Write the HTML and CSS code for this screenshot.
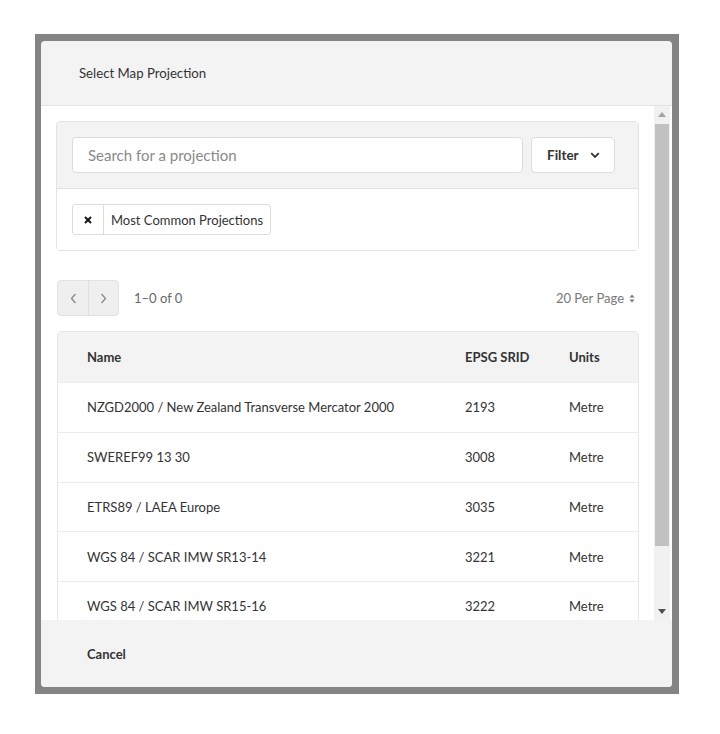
FILE: index.html
```html
<!DOCTYPE html>
<html>
<head>
<meta charset="utf-8">
<link rel="stylesheet" href="styles.css">
</head>
<body>
<div class="backdrop">
  <div class="modal">
    <div class="modal-header">Select Map Projection</div>
    <div class="modal-body">
      <div class="scroll-content">
        <div class="filter-panel">
          <div class="filter-top">
            <div class="search-input">Search for a projection</div>
            <div class="filter-btn">Filter
              <svg class="chev" width="10" height="7" viewBox="0 0 10 7"><path d="M1.2 1.2 L5 5 L8.8 1.2" fill="none" stroke="#333" stroke-width="1.8"/></svg>
            </div>
          </div>
          <div class="filter-bottom">
            <div class="chip">
              <span class="chip-x">
                <svg width="8" height="8" viewBox="0 0 8 8"><path d="M1 1 L7 7 M7 1 L1 7" stroke="#111" stroke-width="1.9"/></svg>
              </span>
              <span class="chip-label">Most Common Projections</span>
            </div>
          </div>
        </div>

        <div class="pager">
          <div class="pager-left">
            <div class="pager-btns">
              <span class="pbtn"><svg width="7" height="11" viewBox="0 0 7 11"><path d="M5.5 1 L1.5 5.5 L5.5 10" fill="none" stroke="#888" stroke-width="1.3"/></svg></span>
              <span class="pbtn"><svg width="7" height="11" viewBox="0 0 7 11"><path d="M1.5 1 L5.5 5.5 L1.5 10" fill="none" stroke="#888" stroke-width="1.3"/></svg></span>
            </div>
            <span class="pager-count">1–0 of 0</span>
          </div>
          <div class="per-page">20 Per Page
            <svg width="6" height="9" viewBox="0 0 6 9"><path d="M3 0.5 L5.5 3.5 H0.5 Z M3 8.5 L5.5 5.5 H0.5 Z" fill="#777"/></svg>
          </div>
        </div>

        <div class="table">
          <div class="row head">
            <div class="c1">Name</div><div class="c2">EPSG SRID</div><div class="c3">Units</div>
          </div>
          <div class="row">
            <div class="c1">NZGD2000 / New Zealand Transverse Mercator 2000</div><div class="c2">2193</div><div class="c3">Metre</div>
          </div>
          <div class="row">
            <div class="c1">SWEREF99 13 30</div><div class="c2">3008</div><div class="c3">Metre</div>
          </div>
          <div class="row">
            <div class="c1">ETRS89 / LAEA Europe</div><div class="c2">3035</div><div class="c3">Metre</div>
          </div>
          <div class="row">
            <div class="c1">WGS 84 / SCAR IMW SR13-14</div><div class="c2">3221</div><div class="c3">Metre</div>
          </div>
          <div class="row">
            <div class="c1">WGS 84 / SCAR IMW SR15-16</div><div class="c2">3222</div><div class="c3">Metre</div>
          </div>
        </div>
      </div>
      <div class="scrollbar">
        <div class="sb-btn"><svg width="8" height="5" viewBox="0 0 8 5"><path d="M4 0 L8 5 H0 Z" fill="#a3a3a3"/></svg></div>
        <div class="sb-thumb"></div>
        <div class="sb-rest"></div>
        <div class="sb-btn"><svg width="8" height="5" viewBox="0 0 8 5"><path d="M0 0 H8 L4 5 Z" fill="#505050"/></svg></div>
      </div>
    </div>
    <div class="modal-footer">Cancel</div>
  </div>
</div>
</body>
</html>
```

FILE: styles.css
```css
* { box-sizing: border-box; }
html, body { margin: 0; padding: 0; background: #fff; }
body {
  font-family: Lato, "Open Sans", "Liberation Sans", sans-serif;
  color: #333;
  font-size: 13px;
}
.backdrop {
  margin: 34px 0 0 35px;
  width: 644px;
  height: 660px;
  background: #848484;
  padding: 7px 7px 7px 6px;
}
.modal {
  width: 631px;
  height: 646px;
  border-radius: 4px;
  overflow: hidden;
  background: #f3f3f3;
  display: flex;
  flex-direction: column;
}
.modal-header {
  height: 65px;
  flex: none;
  border-bottom: 1px solid #e2e2e2;
  padding-left: 38px;
  display: flex;
  align-items: center;
  font-size: 13.2px;
  color: #333;
  padding-bottom: 1px;
}
.modal-body {
  height: 514px;
  flex: none;
  background: #fff;
  display: flex;
}
.scroll-content {
  flex: 1;
  overflow: hidden;
  padding: 15px 15px 0 15px;
}
.scrollbar {
  width: 16px;
  margin-right: 2px;
  background: #f1f1f1;
  display: flex;
  flex-direction: column;
}
.sb-btn {
  height: 17px;
  display: flex;
  align-items: center;
  justify-content: center;
  flex: none;
}
.sb-thumb {
  height: 422px;
  margin: 1px 1px 0 1px;
  background: #c1c1c1;
  flex: none;
}
.sb-rest { flex: 1; }

.filter-panel {
  border: 1px solid #e3e3e3;
  border-radius: 4px;
  overflow: hidden;
}
.filter-top {
  background: #f3f3f3;
  padding: 15px 23px 15px 15px;
  display: flex;
  gap: 8px;
  border-bottom: 1px solid #e3e3e3;
}
.search-input {
  flex: 1;
  height: 36px;
  background: #fff;
  border: 1px solid #dcdcdc;
  border-radius: 4px;
  display: flex;
  align-items: center;
  padding-left: 15px;
  font-size: 15px;
  color: #8a8a8a;
}
.filter-btn {
  width: 84px;
  height: 36px;
  background: #fff;
  border: 1px solid #dcdcdc;
  border-radius: 4px;
  display: flex;
  align-items: center;
  padding-left: 15px;
  gap: 11px;
  font-weight: 700;
  font-size: 13.5px;
  color: #333;
}
.filter-bottom {
  background: #fff;
  padding: 15px;
  height: 61px;
}
.chip {
  display: inline-flex;
  height: 31px;
  border: 1px solid #dcdcdc;
  border-radius: 3px;
  align-items: stretch;
}
.chip-x {
  width: 31px;
  border-right: 1px solid #dcdcdc;
  display: flex;
  align-items: center;
  justify-content: center;
}
.chip-label {
  display: flex;
  align-items: center;
  padding: 0 7px 0 7px;
  color: #333;
}

.pager {
  margin-top: 29px;
  height: 36px;
  display: flex;
  align-items: center;
  justify-content: space-between;
  padding-left: 1px;
  padding-right: 4px;
}
.pager-left { display: flex; align-items: center; }
.pager-btns {
  display: flex;
  height: 36px;
  border: 1px solid #e2e2e2;
  border-radius: 4px;
  background: #efefef;
  overflow: hidden;
}
.pbtn {
  width: 30px;
  display: flex;
  align-items: center;
  justify-content: center;
}
.pbtn + .pbtn { border-left: 1px solid #dedede; }
.pager-count {
  margin-left: 15px;
  color: #666;
}
.per-page {
  color: #777;
  display: flex;
  align-items: center;
  gap: 5px;
}

.table {
  margin-top: 15px;
  margin-left: 1px;
  border: 1px solid #e6e6e6;
  border-radius: 4px;
  width: 582px;
}
.row {
  display: grid;
  grid-template-columns: 407px 104px 1fr;
  height: 49.75px;
  align-items: center;
  border-top: 1px solid #ececec;
  color: #333;
}
.row.head {
  border-top: none;
  background: #f3f3f3;
  font-weight: 700;
  height: 50px;
}
.c1 { padding-left: 29px; white-space: nowrap; }

.modal-footer {
  flex: 1;
  background: #f3f3f3;
  padding-left: 46px;
  display: flex;
  align-items: center;
  font-weight: 700;
  color: #333;
}
```
